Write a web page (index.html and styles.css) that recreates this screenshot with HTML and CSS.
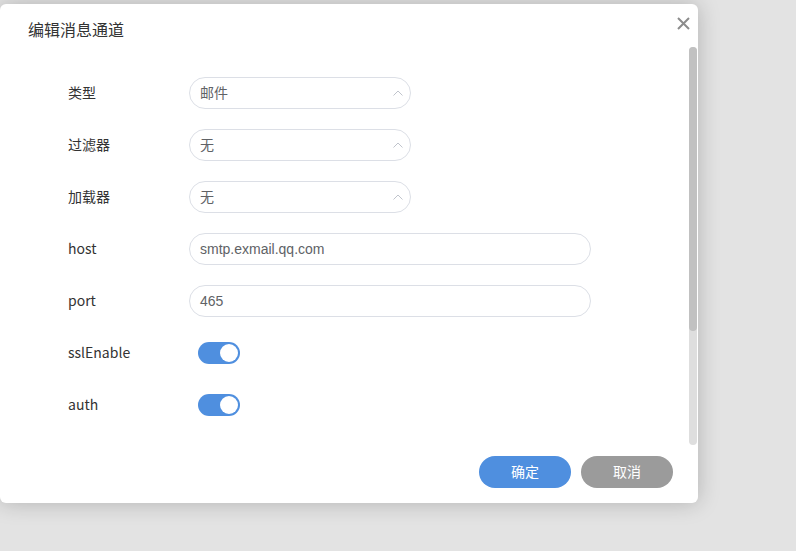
FILE: index.html
```html
<!DOCTYPE html>
<html lang="zh-CN">
<head>
<meta charset="utf-8">
<title>编辑消息通道</title>
<link rel="stylesheet" href="styles.css">
</head>
<body>
<div class="dialog">
  <div class="dialog-header">
    <span class="dialog-title">编辑消息通道</span>
    <button class="close-btn" aria-label="关闭">
      <svg width="13" height="13" viewBox="0 0 13 13"><path d="M1 1L12 12M12 1L1 12" stroke="#8c8c8c" stroke-width="2" fill="none"/></svg>
    </button>
  </div>
  <div class="dialog-body">
    <div class="form">
      <div class="row">
        <label class="label">类型</label>
        <div class="select"><span>邮件</span><svg class="caret" width="10" height="6" viewBox="0 0 10 6"><path d="M0.5 5.5L5 1L9.5 5.5" stroke="#c0c4cc" stroke-width="1" fill="none"/></svg></div>
      </div>
      <div class="row">
        <label class="label">过滤器</label>
        <div class="select"><span>无</span><svg class="caret" width="10" height="6" viewBox="0 0 10 6"><path d="M0.5 5.5L5 1L9.5 5.5" stroke="#c0c4cc" stroke-width="1" fill="none"/></svg></div>
      </div>
      <div class="row">
        <label class="label">加载器</label>
        <div class="select"><span>无</span><svg class="caret" width="10" height="6" viewBox="0 0 10 6"><path d="M0.5 5.5L5 1L9.5 5.5" stroke="#c0c4cc" stroke-width="1" fill="none"/></svg></div>
      </div>
      <div class="row">
        <label class="label">host</label>
        <div class="input">smtp.exmail.qq.com</div>
      </div>
      <div class="row">
        <label class="label">port</label>
        <div class="input">465</div>
      </div>
      <div class="row">
        <label class="label">sslEnable</label>
        <div class="switch on"><span class="knob"></span></div>
      </div>
      <div class="row">
        <label class="label">auth</label>
        <div class="switch on"><span class="knob"></span></div>
      </div>
    </div>
    <div class="scrollbar"><div class="scroll-thumb"></div></div>
  </div>
  <div class="dialog-footer">
    <button class="btn btn-primary">确定</button>
    <button class="btn btn-cancel">取消</button>
  </div>
</div>
</body>
</html>
```
FILE: styles.css
```css
html, body {
  margin: 0;
  padding: 0;
}
body {
  background: #e3e3e3;
  width: 796px;
  height: 551px;
  overflow: hidden;
  font-family: "Noto Sans CJK SC", "Liberation Sans", sans-serif;
}
.dialog {
  position: relative;
  margin-top: 4px;
  width: 698px;
  height: 499px;
  background: #fff;
  border-radius: 6px;
  box-shadow: 0 0 22px rgba(0, 0, 0, 0.22);
  display: flex;
  flex-direction: column;
}
.dialog-header {
  height: 43px;
  flex: none;
  box-sizing: border-box;
  padding: 15px 0 0 28px;
}
.dialog-title {
  font-size: 16px;
  line-height: 20px;
  color: #333;
  display: block;
}
.close-btn {
  position: absolute;
  top: 13px;
  right: 8px;
  width: 13px;
  height: 13px;
  padding: 0;
  border: 0;
  background: none;
  display: flex;
}
.dialog-body {
  position: relative;
  flex: 1;
  overflow: hidden;
}
.scrollbar {
  position: absolute;
  top: 0;
  bottom: 0;
  right: 1px;
  width: 8px;
  background: #dedede;
  border-radius: 4px;
}
.scroll-thumb {
  height: 284px;
  background: #c1c1c1;
  border-radius: 4px;
}
.form {
  padding: 30px 0 0 68px;
  display: flex;
  flex-direction: column;
  gap: 20px;
}
.row {
  display: flex;
  align-items: center;
  height: 32px;
}
.label {
  width: 121px;
  flex: none;
  font-size: 14px;
  line-height: 20px;
  padding-bottom: 2px;
  color: #333;
}
.select, .input {
  box-sizing: border-box;
  height: 32px;
  border: 1px solid #dcdfe6;
  border-radius: 16px;
  padding: 0 10px;
  display: flex;
  align-items: center;
  font-size: 14px;
  color: #606266;
}
.select {
  width: 222px;
  justify-content: space-between;
  padding-right: 7px;
}
.select span {
  padding-bottom: 2px;
}
.input {
  width: 402px;
  font-family: "Liberation Sans", Arial, sans-serif;
}
.switch {
  margin-left: 9px;
  width: 42px;
  height: 22px;
  border-radius: 11px;
  background: #dcdfe6;
  box-sizing: border-box;
  padding: 2px;
  display: flex;
}
.switch.on {
  background: #4f8fdf;
  justify-content: flex-end;
}
.knob {
  width: 18px;
  height: 18px;
  border-radius: 50%;
  background: #fff;
}
.dialog-footer {
  height: 58px;
  flex: none;
  box-sizing: border-box;
  padding: 11px 25px 0 0;
  display: flex;
  justify-content: flex-end;
  gap: 10px;
}
.btn {
  width: 92px;
  height: 32px;
  border: 0;
  border-radius: 16px;
  color: #fff;
  font-size: 14px;
  font-family: "Noto Sans CJK SC", sans-serif;
  padding: 0 0 2px;
}
.btn-primary {
  background: #4f8fdf;
}
.btn-cancel {
  background: #9b9b9b;
}
```
